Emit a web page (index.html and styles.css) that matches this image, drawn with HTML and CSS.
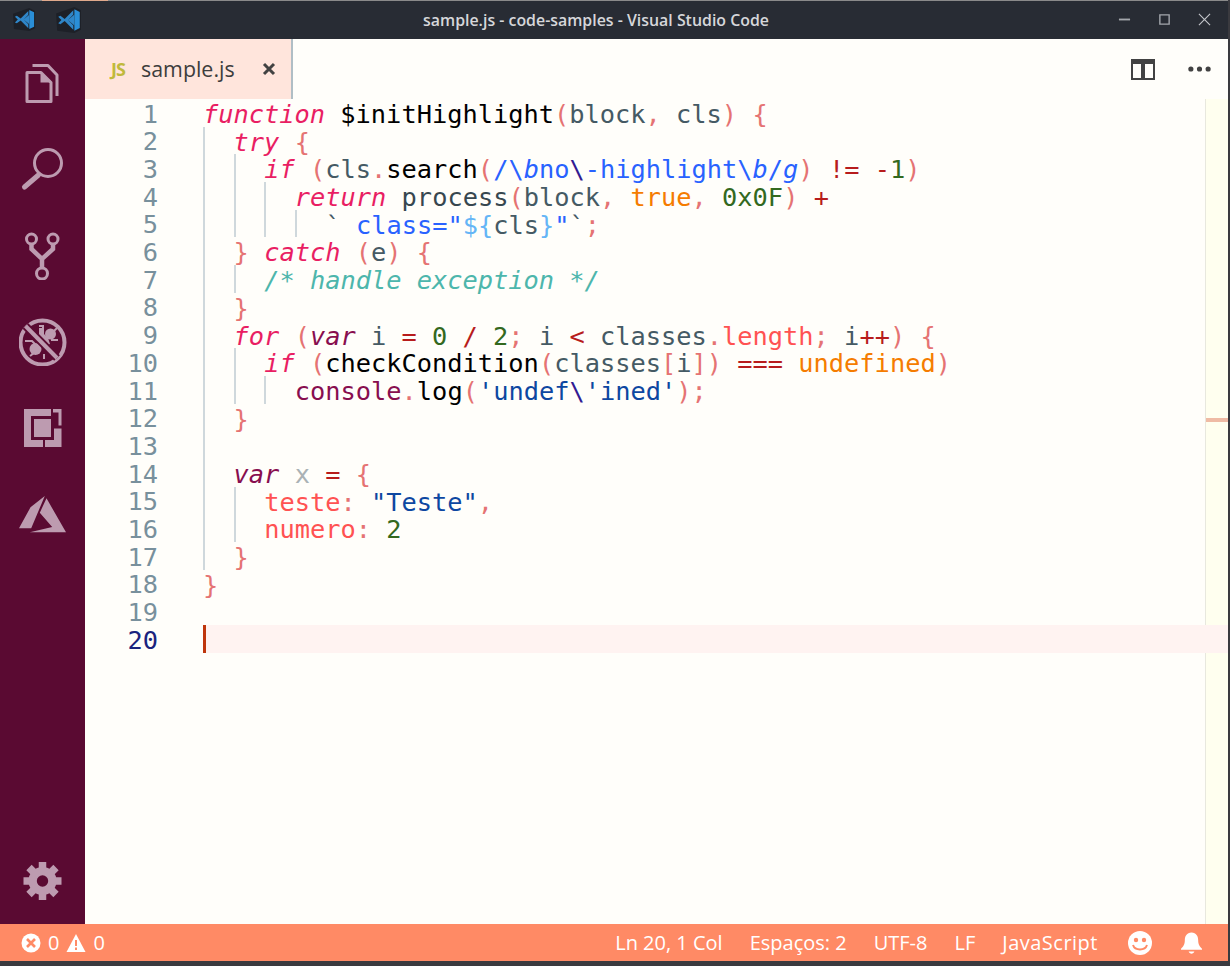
FILE: index.html
```html
<!DOCTYPE html>
<html lang="pt">
<head>
    <meta charset="UTF-8">
    <title>sample.js - code-samples - Visual Studio Code</title>
    <link rel="stylesheet" href="styles.css">
</head>
<body>
<div class="window">
    <div class="titlebar">
        <div class="app-icons">
            <svg class="vs-logo" viewBox="0 0 26 24"><path d="M1 6 18 0l6 3v18l-6 3-16-2z" fill="#1d2027"/><path d="M18 2l5 2.500v15L18 22z" fill="#2a8fd8"/><path d="M18 7v10l-6-5zM3 9l2-1 4 3 8-8v4l-5 5 5 5v4l-8-8-4 3-2-1 3-3z" fill="#2f86c8"/></svg>
            <svg class="vs-logo" viewBox="0 0 26 24"><path d="M1 6 18 0l6 3v18l-6 3-16-2z" fill="#1d2027"/><path d="M18 2l5 2.500v15L18 22z" fill="#2a8fd8"/><path d="M18 7v10l-6-5zM3 9l2-1 4 3 8-8v4l-5 5 5 5v4l-8-8-4 3-2-1 3-3z" fill="#2f86c8"/></svg>
        </div>
        <div class="title">sample.js - code-samples - Visual Studio Code</div>
        <div class="win-buttons">
            <svg viewBox="0 0 14 14"><path d="M1 7h12" stroke="#a3a6ac" stroke-width="2"/></svg>
            <svg viewBox="0 0 14 14"><path d="M2 2h10v10H2z" fill="none" stroke="#a3a6ac" stroke-width="1.500"/></svg>
            <svg viewBox="0 0 14 14"><path d="M1 1l12 12M13 1 1 13" stroke="#c3c5ca" stroke-width="1.200"/></svg>
        </div>
    </div>
    <div class="workbench">
        <nav class="activitybar">
            <div class="act-item">
                <svg class="act-icon" viewBox="0 0 48 48"><path d="M13.500 5.500H29l9 9.500v21" fill="none" stroke="#bd9bb0" stroke-width="3" stroke-linejoin="round"/><path d="M8 12.500h14l10 10v19H8z" fill="none" stroke="#bd9bb0" stroke-width="3" stroke-linejoin="round"/><path d="M21.500 12v10.500H33z" fill="#bd9bb0"/></svg>
            </div>
            <div class="act-item">
                <svg class="act-icon" viewBox="0 0 48 48"><circle cx="29" cy="17" r="13.500" fill="none" stroke="#bd9bb0" stroke-width="3"/><path d="M5.500 41l14-12" stroke="#bd9bb0" stroke-width="5" stroke-linecap="round"/></svg>
            </div>
            <div class="act-item">
                <svg class="act-icon" viewBox="0 0 48 48"><g fill="none" stroke="#bd9bb0"><circle cx="12.500" cy="7" r="5" stroke-width="3"/><circle cx="34" cy="7" r="5" stroke-width="3"/><circle cx="23" cy="41.500" r="5.500" stroke-width="3"/><path d="M12.500 12v5l10.500 10 11-10v-5M23 27v9" stroke-width="4.500"/></g></svg>
            </div>
            <div class="act-item">
                <svg class="act-icon" viewBox="0 0 48 48"><circle cx="23.500" cy="24.500" r="22" fill="none" stroke="#bd9bb0" stroke-width="4"/><circle cx="16.500" cy="31" r="6" fill="#bd9bb0"/><path d="M20 10h5v6l4 4 2 6-6 3-10-11 5-2z" fill="#bd9bb0"/><circle cx="31.500" cy="16" r="5.500" fill="#bd9bb0"/><path d="M38 10l-4 4M39 22h-7M6 23h7l3 3M11 38l4-3M25 41v-5M20 8h4v4" fill="none" stroke="#bd9bb0" stroke-width="2"/><path d="M6.500 8 38 40" stroke="#5a0a32" stroke-width="8"/><path d="M6.500 8 38 40" stroke="#bd9bb0" stroke-width="4"/></svg>
            </div>
            <div class="act-item">
                <svg class="act-icon" viewBox="0 0 48 48"><path d="M5 5h37.500v38H5z" fill="#bd9bb0"/><path d="M13.500 13.500h20v21h-20z" fill="none" stroke="#5a0a32" stroke-width="3"/><path d="M32 5h2v8h-2zM32 8.500h7.500v13H32zM33 21.500h10v3H33zM24 36h2v7h-2z" fill="#5a0a32"/></svg>
            </div>
            <div class="act-item">
                <svg class="act-icon" viewBox="0 0 48 48"><path d="M25.800 6 11.500 17.300 0 38.300h12.200zM27.500 8.300 47 42.300H10.800L33.200 37 20.800 22.700z" fill="#bd9bb0"/></svg>
            </div>
            <div class="act-item act-bottom">
                <svg class="act-icon" viewBox="0 0 48 48"><circle cx="23.500" cy="24" r="14" fill="#bd9bb0"/><path d="M23.500 5v38M4.500 24h38M10 10.500l27 27M37 10.500l-27 27" stroke="#bd9bb0" stroke-width="7.500"/><circle cx="23.500" cy="24" r="5.700" fill="#5a0a32"/></svg>
            </div>
        </nav>
        <main class="editor-group">
            <div class="tabs">
                <div class="tab">
                    <span class="tab-js">JS</span>
                    <span class="tab-name">sample.js</span>
                    <svg class="tab-close" viewBox="0 0 14 14"><path d="M2 2l10 10M12 2 2 12" stroke="#424242" stroke-width="3"/></svg>
                </div>
                <div class="tab-actions">
                    <svg class="split" viewBox="0 0 24 21"><path d="M0 0h24v21H0z" fill="#424242"/><path d="M2 5h8v14H2zM14 5h8v14h-8z" fill="#fffefa"/></svg>
                    <svg class="more" viewBox="0 0 24 6"><circle cx="3" cy="3" r="2.700" fill="#424242"/><circle cx="12" cy="3" r="2.700" fill="#424242"/><circle cx="21" cy="3" r="2.700" fill="#424242"/></svg>
                </div>
            </div>
            <div class="editor">
                <div class="numbers">
                    <div>1</div><div>2</div><div>3</div><div>4</div><div>5</div>
                    <div>6</div><div>7</div><div>8</div><div>9</div><div>10</div>
                    <div>11</div><div>12</div><div>13</div><div>14</div><div>15</div>
                    <div>16</div><div>17</div><div>18</div><div>19</div>
                    <div class="num-active">20</div>
                </div>
                <div class="code">
                    <div class="line"><span><i class="kw">function</i> <span class="fn">$initHighlight</span><span class="pn">(</span><span class="var">block</span><span class="pn">,</span> <span class="var">cls</span><span class="pn">)</span> <span class="pn">{</span></span></div>
                    <div class="line"><b class="g"></b><span><i class="kw">try</i> <span class="pn">{</span></span></div>
                    <div class="line"><b class="g"></b><b class="g"></b><span><i class="kw">if</i> <span class="pn">(</span><span class="var">cls</span><span class="pn">.</span><span class="fn">search</span><span class="pn">(</span><span class="re">/\<i>b</i>no<span class="esc">\</span>-highlight\<i>b</i>/<i>g</i></span><span class="pn">)</span> <span class="op">!=</span> <span class="op">-</span><span class="num">1</span><span class="pn">)</span></span></div>
                    <div class="line"><b class="g"></b><b class="g"></b><b class="g"></b><span><i class="kw">return</i> <span class="call">process</span><span class="pn">(</span><span class="var">block</span><span class="pn">,</span> <span class="lit">true</span><span class="pn">,</span> <span class="num">0x0F</span><span class="pn">)</span> <span class="op">+</span></span></div>
                    <div class="line"><b class="g"></b><b class="g"></b><b class="g"></b><b class="g"></b><span><span class="tick">`</span> <span class="re">class="</span><span class="tpl">${</span><span class="var">cls</span><span class="tpl">}</span><span class="re">"</span><span class="tick">`</span><span class="pn">;</span></span></div>
                    <div class="line"><b class="g"></b><span><span class="pn">}</span> <i class="kw">catch</i> <span class="pn">(</span><span class="var">e</span><span class="pn">)</span> <span class="pn">{</span></span></div>
                    <div class="line"><b class="g"></b><b class="g"></b><span><i class="cm">/* handle exception */</i></span></div>
                    <div class="line"><b class="g"></b><span><span class="pn">}</span></span></div>
                    <div class="line"><b class="g"></b><span><i class="kw">for</i> <span class="pn">(</span><i class="decl">var</i> <span class="var">i</span> <span class="op">=</span> <span class="num">0</span> <span class="op">/</span> <span class="num">2</span><span class="pn">;</span> <span class="var">i</span> <span class="op">&lt;</span> <span class="var">classes</span><span class="pn">.</span><span class="prop">length</span><span class="pn">;</span> <span class="var">i</span><span class="op">++</span><span class="pn">)</span> <span class="pn">{</span></span></div>
                    <div class="line"><b class="g"></b><b class="g"></b><span><i class="kw">if</i> <span class="pn">(</span><span class="fn">checkCondition</span><span class="pn">(</span><span class="var">classes</span><span class="pn">[</span><span class="var">i</span><span class="pn">])</span> <span class="op">===</span> <span class="lit">undefined</span><span class="pn">)</span></span></div>
                    <div class="line"><b class="g"></b><b class="g"></b><b class="g"></b><span><span class="decl">console</span><span class="pn">.</span><span class="fn">log</span><span class="pn">(</span><span class="str">'undef<span class="esc">\</span>'ined'</span><span class="pn">);</span></span></div>
                    <div class="line"><b class="g"></b><span><span class="pn">}</span></span></div>
                    <div class="line"><b class="g"></b></div>
                    <div class="line"><b class="g"></b><span><i class="decl">var</i> <span class="dim">x</span> <span class="op">=</span> <span class="pn">{</span></span></div>
                    <div class="line"><b class="g"></b><b class="g"></b><span><span class="prop">teste</span><span class="pn">:</span> <span class="str">"Teste"</span><span class="pn">,</span></span></div>
                    <div class="line"><b class="g"></b><b class="g"></b><span><span class="prop">numero</span><span class="pn">:</span> <span class="num">2</span></span></div>
                    <div class="line"><b class="g"></b><span><span class="pn">}</span></span></div>
                    <div class="line"><span><span class="pn">}</span></span></div>
                    <div class="line"></div>
                    <div class="line line-active"><b class="cursor"></b></div>
                </div>
                <div class="minimap"><div class="mark"></div></div>
            </div>
        </main>
    </div>
    <footer class="statusbar">
        <div class="status-left">
            <svg class="st-icon" viewBox="0 0 20 20"><circle cx="10" cy="10" r="9.500" fill="#fff"/><path d="M6 6l8 8M14 6l-8 8" stroke="#ff8a65" stroke-width="2.600"/></svg>
            <span>0</span>
            <svg class="st-icon" viewBox="0 0 20 20"><path d="M10 1 19.500 19H.5z" fill="#fff"/><path d="M10 7v6M10 14.500v2.500" stroke="#ff8a65" stroke-width="2"/></svg>
            <span>0</span>
        </div>
        <div class="status-right">
            <span>Ln 20, 1 Col</span>
            <span>Espaços: 2</span>
            <span>UTF-8</span>
            <span>LF</span>
            <span class="st-lang">JavaScript</span>
            <svg class="st-big" viewBox="0 0 24 24"><circle cx="12" cy="12" r="12" fill="#fff"/><circle cx="8" cy="9" r="2.200" fill="#ff8a65"/><circle cx="16" cy="9" r="2.200" fill="#ff8a65"/><path d="M5 14c2 6 12 6 14 0" fill="none" stroke="#ff8a65" stroke-width="2"/></svg>
            <svg class="st-bell" viewBox="0 0 22 24"><path d="M11 1c5 0 7 4 7 8 0 5 2 7 4 9v1H0v-1c2-2 4-4 4-9 0-4 2-8 7-8z" fill="#fff"/><path d="M8 21h6c-1 3-5 3-6 0z" fill="#fff"/></svg>
        </div>
    </footer>
</div>
</body>
</html>
```

FILE: styles.css
```css
* {
    box-sizing: border-box;
}
html, body {
    margin: 0;
    height: 100%;
    background-color: #3a3a3f;
    overflow: hidden;
}
.window {
    width: 1228px;
    height: 961px;
    display: flex;
    flex-direction: column;
    font-family: "Open Sans", sans-serif;
}
.titlebar {
    height: 39px;
    flex: none;
    background-color: #282c34;
    background-image: linear-gradient(90deg, #8a8a8a 42px, #e0a98c 42px, #e0a98c 108px, #8a8a8a 108px);
    background-size: 100% 1px;
    background-repeat: no-repeat;
    display: flex;
    align-items: center;
    position: relative;
    padding-left: 12px;
    justify-content: space-between;
}
.app-icons {
    display: flex;
    gap: 18px;
    align-items: center;
}
.vs-logo {
    width: 25px;
    height: 23px;
}
.vs-logo + .vs-logo {
    width: 28px;
    height: 26px;
}
.title {
    color: #d6d7da;
    font-weight: 600;
    font-size: 15.9px;
    position: absolute;
    left: 0;
    right: 36px;
    padding-top: 1px;
    text-align: center;
}
.win-buttons {
    display: flex;
    gap: 27px;
    padding-right: 17px;
}
.win-buttons svg {
    width: 13px;
    height: 13px;
}
.workbench {
    flex: 1;
    display: flex;
    min-height: 0;
}
.activitybar {
    width: 85px;
    flex: none;
    background-color: #5a0a32;
    display: flex;
    flex-direction: column;
    padding-top: 2px;
}
.act-item {
    height: 86px;
    flex: none;
    display: flex;
    align-items: center;
    justify-content: center;
}
.act-bottom {
    margin-top: auto;
}
.act-icon {
    width: 48px;
    height: 48px;
}
.editor-group {
    flex: 1;
    display: flex;
    flex-direction: column;
    background-color: #fffefa;
    min-width: 0;
}
.tabs {
    height: 60px;
    flex: none;
    display: flex;
    justify-content: space-between;
    align-items: center;
}
.tab {
    width: 208px;
    height: 60px;
    background-color: #ffe5dc;
    border-right: 2px solid #b0bec5;
    display: flex;
    align-items: center;
    padding-left: 26px;
}
.tab-js {
    color: #c0b93c;
    font-size: 18px;
    font-weight: 700;
    width: 30px;
    letter-spacing: -1px;
}
.tab-name {
    color: #3d3d3d;
    font-size: 21.4px;
    width: 121px;
    padding-bottom: 1px;
}
.tab-close {
    width: 14px;
    height: 14px;
}
.tab-actions {
    display: flex;
    align-items: center;
    gap: 33px;
    padding-right: 17px;
}
.split {
    width: 24px;
    height: 21px;
}
.more {
    width: 23px;
    height: 6px;
}
.editor {
    flex: 1;
    display: flex;
    min-height: 0;
    font-family: "DejaVu Sans Mono", monospace;
    font-size: 25.35px;
    line-height: 27.7px;
}
.numbers {
    width: 73px;
    flex: none;
    padding-top: 1.5px;
    text-align: right;
    color: #78909c;
}
.num-active {
    color: #1a237e;
}
.code {
    flex: 1;
    margin-left: 45px;
    min-width: 0;
}
.line {
    height: 27.7px;
    display: flex;
    white-space: pre;
}
.line > span {
    line-height: 30.5px;
}
.g {
    width: 30.6px;
    flex: none;
    border-left: 2px solid #cfd8dc;
}
.line-active {
    background-color: #fff3f1;
    margin-right: -23px;
    position: relative;
}
.cursor {
    width: 3px;
    background-color: #bf360c;
}
.minimap {
    width: 23px;
    flex: none;
    background-color: #ffffef;
    border-left: 1px solid #e8e8de;
    padding-top: 319px;
}
.mark {
    height: 4px;
    background-color: #efbba4;
}
.kw { color: #e91e63; }
.fn { color: #000; }
.pn { color: #e57373; }
.var { color: #455a64; }
.re { color: #2962ff; }
.esc { color: #311b92; }
.op { color: #b71c1c; }
.num { color: #33691e; }
.call { color: #37474f; }
.lit { color: #f57c00; }
.tick { color: #455a64; }
.tpl { color: #64b5f6; }
.cm { color: #4db6ac; }
.decl { color: #880e4f; }
.prop { color: #ff5252; }
.str { color: #0d47a1; }
.dim { color: #aab2b5; }
.statusbar {
    height: 37px;
    flex: none;
    background-color: #ff8a65;
    color: #fff;
    font-size: 20px;
    display: flex;
    justify-content: space-between;
    align-items: center;
    padding: 0 26px 0 21px;
}
.status-left, .status-right {
    display: flex;
    align-items: center;
}
.status-left {
    gap: 7px;
}
.status-right {
    gap: 27px;
}
.st-lang {
    letter-spacing: 0.5px;
}
.st-icon {
    width: 20px;
    height: 20px;
}
.st-big {
    width: 24px;
    height: 24px;
    margin-left: 3px;
}
.st-bell {
    width: 21px;
    height: 24px;
    margin-left: 2px;
}
```
